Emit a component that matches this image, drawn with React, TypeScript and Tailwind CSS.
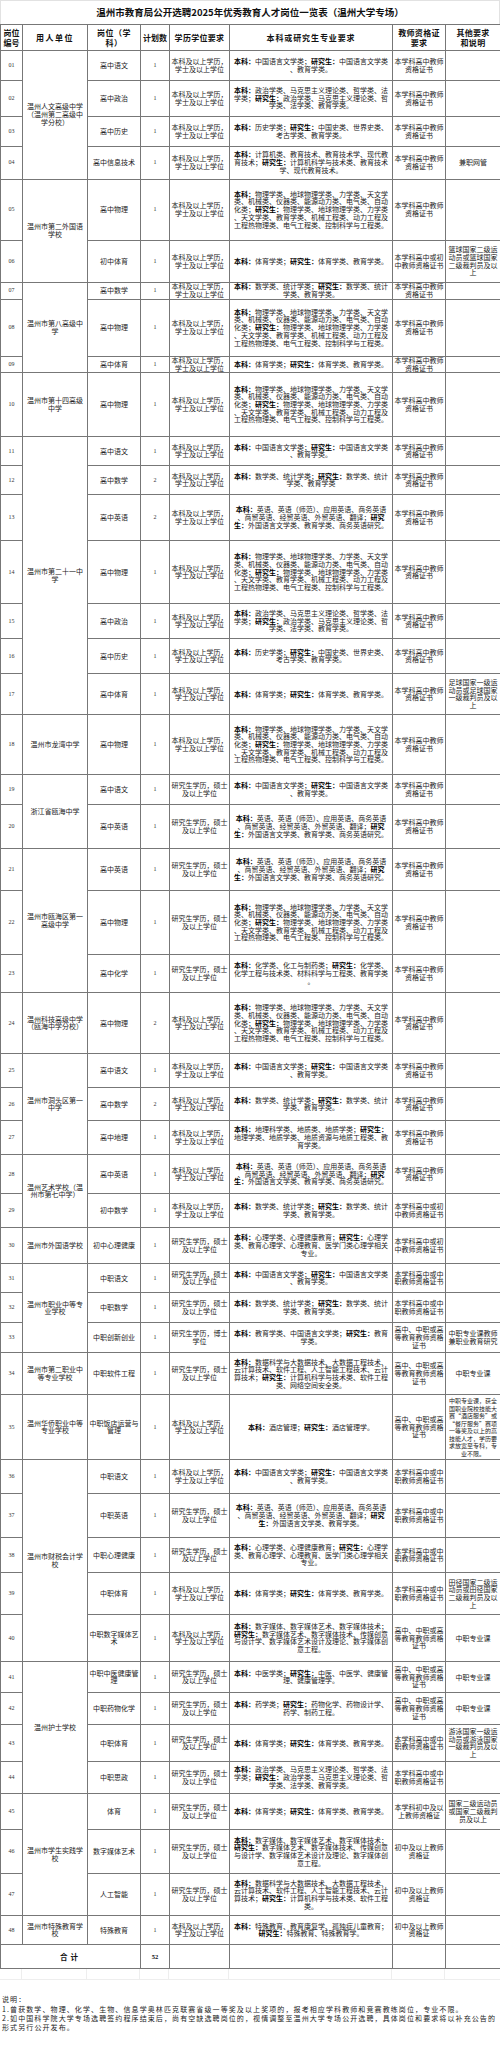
import React from 'react';

type Ch = { c: string; b: boolean };

function parse(s: string): Ch[] {
  const out: Ch[] = [];
  s.split('**').forEach((p, i) => {
    for (const ch of Array.from(p)) out.push({ c: ch, b: i % 2 === 1 });
  });
  return out;
}

function chunk(s: string, n: number): Ch[][] {
  const chars = parse(s);
  const lines: Ch[][] = [];
  let i = 0;
  while (i < chars.length) {
    let end = Math.min(i + n, chars.length);
    if (end < chars.length && chars[end].c === '：') end -= 1;
    lines.push(chars.slice(i, end));
    i = end;
  }
  return lines;
}

function renderLine(ln: Ch[]) {
  const groups: { t: string; b: boolean }[] = [];
  ln.forEach((ch) => {
    const last = groups[groups.length - 1];
    if (last && last.b === ch.b) last.t += ch.c;
    else groups.push({ t: ch.c, b: ch.b });
  });
  return groups.map((g, i) =>
    g.b ? (
      <span key={i} className="font-bold text-[#000]">
        {g.t}
      </span>
    ) : (
      <span key={i}>{g.t}</span>
    )
  );
}

function Lines({ text, n }: { text: string; n: number }) {
  const lines = chunk(text, n);
  return (
    <>
      {lines.map((ln, i) => (
        <div key={i} className="whitespace-nowrap">
          {renderLine(ln)}
        </div>
      ))}
    </>
  );
}

const E1 = '本科及以上学历，学士及以上学位';
const E2 = '研究生学历，硕士及以上学位';
const E3 = '研究生学历，博士学位';

const C1 = '本学科高中教师资格证书';
const C2 = '本学科高中或初中教师资格证书';
const C3 = '本学科高中或中职教师资格证书';
const C4 = '高中、中职或高等教育教师资格证书';
const C5 = '本学科初中及以上教师资格证';
const C6 = '初中及以上教师资格证';

const YW = '**本科：**中国语言文学类；**研究生：**中国语言文学类、教育学类。';
const ZZ = '**本科：**政治学类、马克思主义理论类、哲学类、法学类；**研究生：**政治学类、马克思主义理论类、哲学类、法学类、教育学类。';
const LS = '**本科：**历史学类；**研究生：**中国史类、世界史类、考古学类、教育学类。';
const XX = '**本科：**计算机类、教育技术、教育技术学、现代教育技术；**研究生：**计算机科学与技术类、教育技术学、现代教育技术。';
const WL = '**本科：**物理学类、地球物理学类、力学类、天文学类、机械类、仪器类、能源动力类、电气类、自动化类；**研究生：**物理学类、地球物理学类、力学类、天文学类、教育学类、机械工程类、动力工程及工程热物理类、电气工程类、控制科学与工程类。';
const TY = '**本科：**体育学类；**研究生：**体育学类、教育学类。';
const SX = '**本科：**数学类、统计学类；**研究生：**数学类、统计学类、教育学类。';
const SX2 = '**本科：**数学类、统计学类；**研究生：**数学类、统计学类、教育学类';
const YY = '**本科：**英语、英语（师范）、应用英语、商务英语、商贸英语、经贸英语、外贸英语、翻译；**研究生：**外国语言文学类、教育学类、商务英语研究。';
const YY2 = '**本科：**英语、英语（师范）、应用英语、商务英语、商贸英语、经贸英语、外贸英语、翻译；**研究生：**外国语言文学类、教育学类。';
const HX = '**本科：**化学类、化工与制药类；**研究生：**化学类、化学工程与技术类、材料科学与工程类、教育学类。';
const DL = '**本科：**地理科学类、地质类、地质学类；**研究生：**地理学类、地质学类、地质资源与地质工程类、教育学类。';
const XL = '**本科：**心理学类、心理健康教育；**研究生：**心理学类、教育心理学、心理教育、医学门类心理学相关专业。';
const CX = '**本科：**教育学类、中国语言文学类；**研究生：**教育学类。';
const RJ = '**本科：**数据科学与大数据技术、大数据工程技术、云计算技术、软件工程、人工智能工程技术、云计算技术；**研究生：**计算机科学与技术类、软件工程类、网络空间安全类。';
const JD = '**本科：**酒店管理；**研究生：**酒店管理学。';
const SM = '**本科：**数字媒体、数字媒体艺术、数字媒体技术；**研究生：**数字媒体艺术、数字媒体技术、传媒创意与设计学、数字媒体艺术设计及理论、数字媒体创意工程。';
const ZY = '**本科：**中医学类；**研究生：**中医、中医学、健康管理、健康管理学。';
const YX = '**本科：**药学类；**研究生：**药物化学、药物设计学、药学、制药工程。';
const AI = '**本科：**数据科学与大数据技术、大数据工程技术、云计算技术、软件工程、人工智能工程技术、云计算技术；**研究生：**计算机科学与技术类、软件工程类。';
const TS = '**本科：**特殊教育、教育康复学、孤独症儿童教育；**研究生：**特殊教育、特殊教育学。';

const N35 = '中职专业课，获全国职业院校技能大赛“酒店服务”或“餐厅服务”赛项一等奖及以上的高技能人才，学历要求放宽至专科，专业不限。';

type Row = [string, string | null, number, string, number, string, string, string, string, number];

const rows: Row[] = [
  ['01', '温州人文高级中学（温州第二高级中学分校）', 4, '高中语文', 1, E1, YW, C1, '', 30],
  ['02', null, 0, '高中政治', 1, E1, ZZ, C1, '', 36],
  ['03', null, 0, '高中历史', 1, E1, LS, C1, '', 30],
  ['04', null, 0, '高中信息技术', 1, E1, XX, C1, '兼职网管', 33],
  ['05', '温州市第二外国语学校', 2, '高中物理', 1, E1, WL, C1, '', 61],
  ['06', null, 0, '初中体育', 1, E1, TY, C2, '篮球国家二级运动员或篮球国家二级裁判员及以上', 42],
  ['07', '温州市第八高级中学', 3, '高中数学', 1, E1, SX, C1, '', 17],
  ['08', null, 0, '高中物理', 1, E1, WL, C1, '', 57],
  ['09', null, 0, '高中体育', 1, E1, TY, C1, '', 16],
  ['10', '温州市第十四高级中学', 1, '高中物理', 1, E1, WL, C1, '', 64],
  ['11', '温州市第二十一中学', 7, '高中语文', 1, E1, YW, C1, '', 29],
  ['12', null, 0, '高中数学', 2, E1, SX2, C1, '', 29],
  ['13', null, 0, '高中英语', 2, E1, YY, C1, '', 46],
  ['14', null, 0, '高中物理', 1, E1, WL, C1, '', 63],
  ['15', null, 0, '高中政治', 1, E1, ZZ, C1, '', 35],
  ['16', null, 0, '高中历史', 1, E1, LS, C1, '', 35],
  ['17', null, 0, '高中体育', 1, E1, TY, C1, '足球国家一级运动员或足球国家一级裁判员及以上', 41],
  ['18', '温州市龙湾中学', 1, '高中物理', 1, E1, WL, C1, '', 60],
  ['19', '浙江省瓯海中学', 2, '高中语文', 1, E2, YW, C1, '', 30],
  ['20', null, 0, '高中英语', 1, E2, YY, C1, '', 44],
  ['21', '温州市瓯海区第一高级中学', 3, '高中英语', 1, E2, YY, C1, '', 42],
  ['22', null, 0, '高中物理', 1, E2, WL, C1, '', 64],
  ['23', null, 0, '高中化学', 1, E2, HX, C1, '', 38],
  ['24', '温州科技高级中学（瓯海中学分校）', 1, '高中物理', 2, E1, WL, C1, '', 61],
  ['25', '温州市洞头区第一中学', 3, '高中语文', 1, E1, YW, C1, '', 34],
  ['26', null, 0, '高中数学', 2, E1, SX, C1, '', 33],
  ['27', null, 0, '高中地理', 1, E1, DL, C1, '', 34],
  ['28', '温州艺术学校（温州市第七中学）', 2, '高中英语', 1, E1, YY, C1, '', 39],
  ['29', null, 0, '初中数学', 1, E1, SX, C2, '', 34],
  ['30', '温州市外国语学校', 1, '初中心理健康', 1, E2, XL, C2, '', 36],
  ['31', '温州市职业中等专业学校', 3, '中职语文', 1, E2, YW, C3, '', 29],
  ['32', null, 0, '中职数学', 1, E2, SX, C3, '', 30],
  ['33', null, 0, '中职创新创业', 1, E3, CX, C4, '中职专业课教师兼职业教育研究', 30],
  ['34', '温州市第二职业中等专业学校', 1, '中职软件工程', 1, E2, RJ, C4, '中职专业课', 42],
  ['35', '温州华侨职业中等专业学校', 1, '中职饭店运营与管理', 1, E1, JD, C4, N35, 65],
  ['36', '温州市财税会计学校', 5, '中职语文', 1, E1, YW, C3, '', 34],
  ['37', null, 0, '中职英语', 1, E2, YY2, C3, '', 44],
  ['38', null, 0, '中职心理健康', 1, E2, XL, C3, '', 35],
  ['39', null, 0, '中职体育', 1, E1, TY, C3, '田径国家二级运动员或田径国家二级裁判员及以上', 42],
  ['40', null, 0, '中职数字媒体艺术', 1, E1, SM, C4, '中职专业课', 47],
  ['41', '温州护士学校', 4, '中职中医健康管理', 1, E2, ZY, C4, '中职专业课', 31],
  ['42', null, 0, '中职药物化学', 1, E2, YX, C4, '中职专业课', 32],
  ['43', null, 0, '中职体育', 1, E2, TY, C3, '游泳国家一级运动员或游泳国家一级裁判员及以上', 37],
  ['44', null, 0, '中职思政', 1, E2, ZZ, C3, '', 32],
  ['45', '温州市学生实践学校', 3, '体育', 1, E2, TY, C5, '国家二级运动员或国家二级裁判员及以上', 36],
  ['46', null, 0, '数字媒体艺术', 1, E2, SM, C6, '', 44],
  ['47', null, 0, '人工智能', 1, E2, AI, C6, '', 42],
  ['48', '温州市特殊教育学校', 1, '特殊教育', 1, E1, TS, C6, '', 29],
];

const td = 'border border-[#777] p-0 align-middle text-center';

export default function App() {
  return (
    <div className="w-[500px] bg-white text-[#222] font-['Noto_Sans_CJK_SC','Noto_Sans',sans-serif]">
      <div className="h-[24px] flex items-center justify-center border border-b-0 border-[#e2e2e2] text-[9.5px] font-bold text-[#111] leading-none">
        温州市教育局公开选聘2025年优秀教育人才岗位一览表（温州大学专场）
      </div>
      <table className="w-[500px] table-fixed border-collapse border border-[#444] text-[7px] leading-[7.7px]">
        <colgroup>
          <col className="w-[22px]" />
          <col className="w-[65px]" />
          <col className="w-[53px]" />
          <col className="w-[29px]" />
          <col className="w-[60px]" />
          <col className="w-[163px]" />
          <col className="w-[53px]" />
          <col className="w-[55px]" />
        </colgroup>
        <thead>
          <tr className="h-[26px] text-[8px] leading-[9.5px] font-bold text-[#111]">
            <th className={td + ' border-[#444]'}>
              <div>岗位</div>
              <div>编号</div>
            </th>
            <th className={td + ' border-[#444] tracking-[1.5px]'}>用人单位</th>
            <th className={td + ' border-[#444] tracking-[0.5px]'}>
              <div>岗位（学</div>
              <div>科）</div>
            </th>
            <th className={td + ' border-[#444]'}>计划数</th>
            <th className={td + ' border-[#444] tracking-[0.3px]'}>学历学位要求</th>
            <th className={td + ' border-[#444] tracking-[0.9px]'}>本科或研究生专业要求</th>
            <th className={td + ' border-[#444] tracking-[0.3px]'}>
              <div>教师资格证</div>
              <div>要求</div>
            </th>
            <th className={td + ' border-[#444] tracking-[0.3px]'}>
              <div>其他要求</div>
              <div>和说明</div>
            </th>
          </tr>
        </thead>
        <tbody>
          {rows.map((r) => {
            const [no, unit, span, post, n, edu, major, cert, note, h] = r;
            return (
              <tr key={no} style={{ height: h }}>
                <td className={td + " font-['Liberation_Serif',serif] text-[6px] text-[#333]"}>{no}</td>
                {unit !== null && (
                  <td rowSpan={span} className={td + ' px-[2px]'}>
                    <Lines text={unit} n={8} />
                  </td>
                )}
                <td className={td}>
                  <Lines text={post} n={7} />
                </td>
                <td className={td + " font-['Liberation_Serif',serif] text-[6px] text-[#333]"}>{n}</td>
                <td className={td}>
                  <Lines text={edu} n={8} />
                </td>
                <td className={td}>
                  <Lines text={major} n={22} />
                </td>
                <td className={td}>
                  <Lines text={cert} n={7} />
                </td>
                <td className={td + (no === '35' ? ' text-[6px] leading-[7.5px]' : '')}>
                  {note && <Lines text={note} n={no === '35' ? 8 : 7} />}
                </td>
              </tr>
            );
          })}
          <tr className="h-[24px]">
            <td colSpan={3} className={td + ' font-bold text-[7.5px] tracking-[3px] text-[#111]'}>
              合计
            </td>
            <td className={td + " font-['Liberation_Serif',serif] font-bold text-[6.5px] text-[#111]"}>52</td>
            <td className={td}></td>
            <td className={td}></td>
            <td className={td}></td>
            <td className={td}></td>
          </tr>
        </tbody>
      </table>
      <div className="h-[11px] flex border-b border-[#eeeeee]">
        <div className="w-[22px] border-r border-[#eeeeee]" />
        <div className="w-[65px] border-r border-[#eeeeee]" />
        <div className="w-[53px] border-r border-[#eeeeee]" />
        <div className="w-[29px] border-r border-[#eeeeee]" />
        <div className="w-[60px] border-r border-[#eeeeee]" />
        <div className="w-[163px] border-r border-[#eeeeee]" />
        <div className="w-[53px] border-r border-[#eeeeee]" />
        <div className="flex-1" />
      </div>
      <div className="pt-[15px] pl-[2px] text-[7px] leading-[9.3px] tracking-[1.1px] text-[#222]">
        <div className="whitespace-nowrap">说明：</div>
        <div className="whitespace-nowrap">
          1.曾获数学、物理、化学、生物、信息学奥林匹克联赛省级一等奖及以上奖项的，报考相应学科教师和竞赛教练岗位，专业不限。
        </div>
        <div className="whitespace-nowrap">
          2.如中国科学院大学专场选聘签约程序结束后，尚有空缺选聘岗位的，视情调整至温州大学专场公开选聘，具体岗位和要求将以补充公告的
        </div>
        <div className="whitespace-nowrap">形式另行公开发布。</div>
      </div>
    </div>
  );
}
